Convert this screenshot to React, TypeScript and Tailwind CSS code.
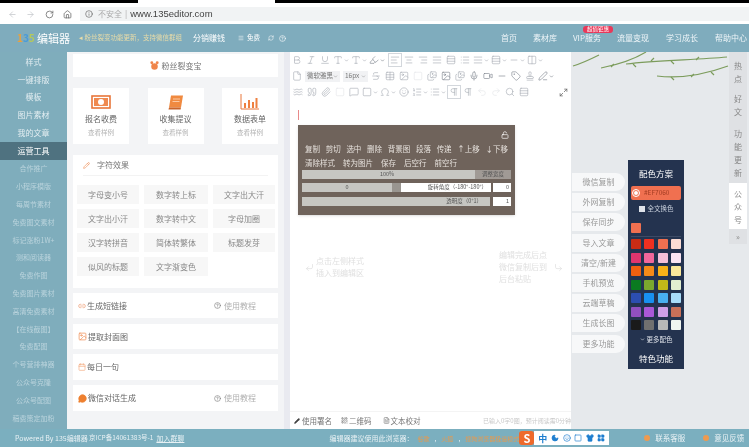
import React from "react";
import {
  ArrowLeft, ArrowRight, RotateCw, Home, Info, Bold, Italic, Underline, Type, Highlighter,
  AlignLeft, AlignCenter, AlignRight, AlignJustify, List, ListOrdered, Rows3, Table, Columns2,
  File, Strikethrough, Image, Images, Mic, Video, Minus, Tag, Stamp, PenLine, Waves, Quote,
  Paperclip, MessageSquare, Square, Omega, Smile, Pilcrow, Undo2, Redo2, Search, Maximize2,
  ChevronDown, LockOpen, CornerDownLeft, CornerDownRight, Pencil, QrCode, FileText, CircleHelp,
  Link2, Calendar, MessageCircle, Globe, RefreshCw, Menu, Moon, Shirt, LayoutGrid,
} from "lucide-react";

const sideTop = ["样式", "一键排版", "模板", "图片素材", "我的文章"];
const sideBottom = ["合作推广", "小程序模版", "每周节素材", "免费图文素材", "标记涨粉1W+", "测和阅读器", "免费作图", "免费图片素材", "高清免费素材", "【在线截图】", "免费配图", "个号营排神器", "公众号克隆", "公众号配图", "稿费策定加粉"];
const navItems = ["首页", "素材库", "VIP服务", "流量变现", "学习成长", "帮助中心"];
const charTools = ["字母变小号", "数字转上标", "文字出大汗", "文字出小汗", "数字转中文", "字母加圈", "汉字转拼音", "简体转繁体", "标题发芽", "似风的标题", "文字渐变色"];
const actions = ["微信复制", "外网复制", "保存同步", "导入文章", "清空/新建", "手机预览", "云端草稿", "生成长图", "更多功能"];
const swatches = [
  "#c82c14", "#f03020", "#f07050", "#fbdcd4",
  "#e0356e", "#f2679b", "#f6c0d8", "#fbe4f2",
  "#f06010", "#f58a18", "#f8b218", "#fbe89a",
  "#0a7a20", "#7aa82e", "#c0b818", "#e2efd0",
  "#2c4eb0", "#1890f0", "#48b0f0", "#a8dcf8",
  "#9050c0", "#a858d8", "#d0a0e8", "#c87058",
  "#1a1a1a", "#707070", "#b8b8b8", "#f0f5f0",
];

interface ToolItem {
  icon: React.ElementType;
  caret?: boolean;
  boxed?: boolean;
  faint?: boolean;
  dark?: boolean;
}

const row1a: ToolItem[] = [
  { icon: Bold }, { icon: Italic }, { icon: Underline },
  { icon: Type, caret: true }, { icon: Type, caret: true }, { icon: Highlighter, caret: true, dark: true },
];
const row1b: ToolItem[] = [
  { icon: AlignLeft, boxed: true }, { icon: AlignCenter }, { icon: AlignRight }, { icon: AlignJustify },
  { icon: Rows3 }, { icon: List }, { icon: AlignJustify, caret: true }, { icon: Rows3, caret: true },
  { icon: Minus, caret: true }, { icon: Columns2, caret: true },
];
const row2: ToolItem[] = [
  { icon: Strikethrough }, { icon: Table }, { icon: Image }, { icon: Square, faint: true },
  { icon: Images }, { icon: Image, dark: true }, { icon: Images }, { icon: Mic, dark: true },
  { icon: Video, dark: true }, { icon: Minus, dark: true }, { icon: Tag, dark: true }, { icon: Stamp }, { icon: PenLine, caret: true, dark: true },
];
const row3: ToolItem[] = [
  { icon: Waves }, { icon: Quote }, { icon: Paperclip }, { icon: Square, faint: true },
  { icon: MessageSquare }, { icon: Square, caret: true }, { icon: Omega, caret: true }, { icon: Smile },
  { icon: ListOrdered, caret: true }, { icon: List, caret: true }, { icon: Pilcrow, boxed: true }, { icon: Pilcrow },
  { icon: Undo2, faint: true }, { icon: Redo2, faint: true }, { icon: Search }, { icon: Rows3 },
];

const Tool = ({ item }: { item: ToolItem }) => {
  const Icon = item.icon;
  const color = item.faint ? "text-[#e4e6e9]" : item.dark ? "text-[#7b828c]" : "text-[#a6acb4]";
  return (
    <div className={`flex h-[14px] items-center justify-center ${item.caret ? "w-[18px]" : "w-[14px]"} ${item.boxed ? "border border-[#d3d7dc]" : ""} ${color}`}>
      <Icon size={10} strokeWidth={1.5} />
      {item.caret && <ChevronDown size={5} strokeWidth={3} className="ml-px" />}
    </div>
  );
};

const HelpLink = () => (
  <div className="flex items-center gap-[3px] text-[8px] text-[#b0b0b0]">
    <CircleHelp size={7} className="text-[#777]" />
    使用教程
  </div>
);

const App = () => {
  return (
    <div className="flex h-[447px] w-[749px] flex-col overflow-hidden bg-white blur-[0.6px] font-['Noto_Sans_CJK_SC','Noto_Sans',sans-serif]">
      {/* browser chrome */}
      <div className="flex h-[3px] shrink-0 bg-black">
        <div className="ml-[138px] w-[137px] bg-white" />
      </div>
      <div className="flex h-[21px] shrink-0 items-start bg-white pt-[4px]">
        <div className="flex h-[14px] w-[80px] items-center text-[#666]">
          <ArrowLeft size={9} className="ml-[8px] text-[#c4c7cb]" />
          <ArrowRight size={9} className="ml-[9px] text-[#c4c7cb]" />
          <RotateCw size={9} className="ml-[10px]" />
          <Home size={9} className="ml-[9px]" />
        </div>
        <div className="flex h-[14px] flex-1 items-center bg-[#f1f3f4] pl-[5px]">
          <Info size={8} className="text-[#666]" />
          <span className="ml-[5px] text-[8px] text-[#aaa]">不安全</span>
          <span className="ml-[3px] text-[8px] text-[#aaa]">|</span>
          <span className="ml-[3px] font-['Liberation_Sans'] text-[9.5px] text-[#444]">www.135editor.com</span>
        </div>
      </div>

      {/* header */}
      <div className="flex h-[28px] shrink-0 items-center bg-[#7facbd] text-white">
        <div className="ml-[17px] flex w-[16px] text-[10px] font-bold leading-none">
          <span className="text-[#e9a13f]">1</span>
          <span className="text-[#4a9bd8]">3</span>
          <span className="text-[#b6c95a]">5</span>
        </div>
        <span className="ml-[4px] text-[11px] leading-none">编辑器</span>
        <span className="ml-[9px] whitespace-nowrap text-[6.5px] text-[#e9dca8]">◂ 粉丝裂变功能更新，支持微信群组</span>
        <span className="ml-[11px] text-[8px]">分销赚钱</span>
        <Menu size={6} className="ml-[13px]" />
        <span className="ml-[3px] text-[6.5px]">免费</span>
        <RefreshCw size={6} className="ml-[8px]" />
        <CircleHelp size={7} className="ml-[5px]" />
        <div className="ml-auto flex items-center pr-[2px] text-[8px] text-[#eef5f8]">
          {navItems.map((item, i) => (
            <div key={item} className={`relative whitespace-nowrap ${i === 0 ? "" : i < 4 ? "ml-[16px]" : "ml-[17px]"}`}>
              {item}
              {i === 2 && (
                <span className="absolute left-[10px] top-[-6px] w-[30px] rounded-[3px] bg-[#e8395a] text-center text-[5.5px] leading-[7px] text-white">
                  超值钜惠
                </span>
              )}
            </div>
          ))}
        </div>
      </div>

      {/* body */}
      <div className="flex min-h-0 flex-1">
        {/* sidebar */}
        <div className="w-[67px] shrink-0 overflow-hidden bg-[#7fadbc] pt-px text-center">
          {sideTop.map((s) => (
            <div key={s} className="flex h-[17.8px] items-center justify-center text-[8px] text-[#e2edf1]">{s}</div>
          ))}
          <div className="flex h-[17.8px] items-center justify-center bg-[#4f7280] text-[8px] text-white">运营工具</div>
          {sideBottom.map((s) => (
            <div key={s} className="flex h-[17.8px] items-center justify-center whitespace-nowrap text-[7px] text-[#b9d3dc]">{s}</div>
          ))}
        </div>

        {/* tools panel */}
        <div className="flex w-[217px] shrink-0 flex-col bg-[#f3f4f6] px-[6px] pt-[2px]">
          <div className="flex h-[23px] shrink-0 items-center justify-center gap-[3px] bg-white text-[8px] text-[#777]">
            <svg width="9" height="9" viewBox="0 0 10 10" fill="#f0854a">
              <circle cx="2" cy="2" r="1.6" /><circle cx="8" cy="2" r="1.6" /><circle cx="5" cy="6" r="3.6" />
            </svg>
            粉丝裂变宝
          </div>
          <div className="mt-[11px] flex h-[56px] shrink-0 justify-between">
            <div className="flex w-[56px] flex-col items-center bg-white pt-[7px]">
              <svg width="20" height="14" viewBox="0 0 20 14">
                <rect x="1" y="1" width="18" height="12" fill="#fff" stroke="#e8763a" strokeWidth="1.6" />
                <rect x="3" y="3" width="14" height="8" fill="#f08a50" />
                <circle cx="10" cy="7" r="3" fill="#fff" />
              </svg>
              <div className="mt-[4px] text-[8px] leading-[12px] text-[#666]">报名收费</div>
              <div className="mt-[2px] text-[6.5px] leading-[10px] text-[#b4b4b4]">查看样例</div>
            </div>
            <div className="flex w-[56px] flex-col items-center bg-white pt-[7px]">
              <svg width="17" height="15" viewBox="0 0 17 15">
                <path d="M4 0.5h12l-2 12H2z" fill="#f08a40" />
                <path d="M2 12.5h12l-0.4 2H1.5z" fill="#c9642a" />
                <path d="M6 4h7M5.500 6.500h7" stroke="#ffd9bd" strokeWidth="0.8" />
              </svg>
              <div className="mt-[3px] text-[8px] leading-[12px] text-[#666]">收集提议</div>
              <div className="mt-[2px] text-[6.5px] leading-[10px] text-[#b4b4b4]">查看样例</div>
            </div>
            <div className="flex w-[56px] flex-col items-center bg-white pt-[6px]">
              <svg width="20" height="16" viewBox="0 0 20 16">
                <path d="M1 0v15h18" fill="none" stroke="#e8763a" strokeWidth="1" />
                <path d="M4 9h2v5H4zM8 6h2v8H8zM12 8h2v6h-2zM15.500 4h2v10h-2z" fill="#ee8040" />
              </svg>
              <div className="mt-[3px] text-[8px] leading-[12px] text-[#666]">数据表单</div>
              <div className="mt-[2px] text-[6.5px] leading-[10px] text-[#b4b4b4]">查看样例</div>
            </div>
          </div>

          <div className="mt-[11px] h-[133px] shrink-0 bg-white px-[4px]">
            <div className="mx-[6px] flex h-[21px] items-center gap-[7px] border-b border-[#f3f3f3] text-[8px] text-[#777]">
              <Pencil size={7} className="text-[#ee8a50]" />
              字符效果
            </div>
            <div className="mt-[9px] grid grid-cols-[62px_64px_62px] gap-x-[5px] gap-y-[5px]">
              {charTools.map((t) => (
                <div key={t} className="flex h-[19px] items-center justify-center bg-[#f7f7f7] text-[8px] text-[#888]">{t}</div>
              ))}
            </div>
          </div>

          <div className="mt-[5px] flex h-[25px] shrink-0 items-center bg-white pl-[5px] pr-[22px] text-[8px] text-[#666]">
            <Link2 size={8} className="mr-[1px] text-[#ee9a70]" />
            生成短链接
            <div className="ml-auto"><HelpLink /></div>
          </div>
          <div className="mt-[6px] flex h-[25px] shrink-0 items-center bg-white pl-[5px] text-[8px] text-[#666]">
            <Image size={9} className="mr-[1px] text-[#f0935c]" />
            提取封面图
          </div>
          <div className="mt-[5px] flex h-[26px] shrink-0 items-center bg-white pl-[5px] text-[8px] text-[#666]">
            <Calendar size={8} className="mr-[1px] text-[#f5ab80]" />
            每日一句
          </div>
          <div className="mt-[5px] flex h-[26px] shrink-0 items-center bg-white pl-[5px] pr-[22px] text-[8px] text-[#666]">
            <MessageCircle size={9} fill="#ee8030" className="mr-[1px] text-[#ee8030]" />
            微信对话生成
            <div className="ml-auto"><HelpLink /></div>
          </div>
        </div>
        <div className="w-[6px] shrink-0 bg-[#e9eaf0]" />

        {/* editor */}
        <div className="flex w-[281px] shrink-0 flex-col bg-white">
          <div className="flex h-[48px] shrink-0 flex-col justify-center gap-[2px]">
            <div className="flex items-center">
              {row1a.map((t, i) => <Tool key={i} item={t} />)}
              <div className="w-[2px]" />
              {row1b.map((t, i) => <Tool key={i} item={t} />)}
            </div>
            <div className="flex items-center">
              <Tool item={{ icon: File }} />
              <div className="ml-px flex h-[11px] w-[35px] items-center justify-between whitespace-nowrap bg-[#f1f2f4] px-[2px] text-[6.5px] text-[#777]">
                微软雅黑 <ChevronDown size={5} />
              </div>
              <div className="ml-[3px] flex h-[11px] w-[25px] items-center justify-between whitespace-nowrap bg-[#f1f2f4] px-[2px] text-[6.5px] text-[#777]">
                16px <ChevronDown size={5} />
              </div>
              <div className="w-px" />
              {row2.map((t, i) => <Tool key={i} item={t} />)}
            </div>
            <div className="flex items-center pl-px">
              {row3.map((t, i) => <Tool key={i} item={t} />)}
              <Maximize2 size={9} className="ml-auto mr-[3px] text-[#666]" />
            </div>
          </div>

          <div className="ml-[8px] mt-[10px] h-[10px] w-px bg-[#e88a8a]" />

          <div className="ml-[8px] mt-[5px] w-[217px] bg-[#6f635b] px-[4px] pb-[9px] pt-[6px] text-[#e6e1dc] shadow-sm">
            <div className="flex h-[11px] justify-end pr-[2px]">
              <LockOpen size={8} className="text-white" />
            </div>
            <div className="flex h-[14px] items-center justify-between px-[3px] text-[7.5px]">
              {["复制", "剪切", "选中", "删除", "背景图", "段落", "传递", "↑上移", "↓下移"].map((t) => <span key={t} className="whitespace-nowrap">{t}</span>)}
            </div>
            <div className="flex h-[14px] items-center gap-[8px] pl-[3px] text-[7.5px]">
              {["清除样式", "转为图片", "保存", "后空行", "前空行"].map((t) => <span key={t} className="whitespace-nowrap">{t}</span>)}
            </div>
            <div className="flex h-[9px] items-center bg-[#c6c6c2] text-[5.5px] text-[#555]">
              <span className="w-[170px] text-center">100%</span>
              <span className="ml-auto h-full w-[36px] whitespace-nowrap bg-[#a09a95] text-center leading-[9px]">调整宽度</span>
            </div>
            <div className="mt-[4px] flex h-[9px] items-center text-[5.5px] text-[#555]">
              <div className="h-full w-[90px] bg-[#c6c6c2] text-center leading-[9px]">0</div>
              <div className="h-full w-[9px] bg-[#999590]" />
              <div className="h-full w-[90px] whitespace-nowrap bg-white pr-[4px] text-right leading-[9px]">旋转角度（-180°-180°）</div>
              <div className="ml-[2px] h-full flex-1 bg-white pr-[2px] text-right leading-[9px]">0</div>
            </div>
            <div className="mt-[5px] flex h-[9px] items-center text-[5.5px] text-[#555]">
              <div className="h-full w-[188px] whitespace-nowrap bg-[#c6c6c2] pr-[8px] text-right leading-[9px]">透明度（0°1）</div>
              <div className="ml-[3px] h-full flex-1 bg-white pr-[2px] text-right leading-[9px]">1</div>
            </div>
          </div>

          <div className="mt-[34px] flex items-center whitespace-nowrap text-[8px] leading-[12px] text-[#e0e0e0]">
            <CornerDownLeft size={9} className="ml-[15px]" />
            <div className="ml-[2px] w-[48px]">
              <div>点击左侧样式</div>
              <div>插入到编辑区</div>
            </div>
            <div className="ml-[135px] w-[48px]">
              <div>编辑完成后点</div>
              <div>微信复制后到</div>
              <div>后台粘贴</div>
            </div>
            <CornerDownRight size={9} className="ml-[7px]" />
          </div>

          <div className="mt-auto flex h-[18px] shrink-0 items-center border-t border-[#f4f4f4] pl-[4px] text-[7.5px] text-[#777]">
            <Pencil size={6} fill="#444" className="text-[#444]" />
            <span className="ml-[2px]">使用署名</span>
            <QrCode size={7} className="ml-[9px]" />
            <span className="ml-[1px]">二维码</span>
            <FileText size={7} className="ml-[11px]" />
            <span className="ml-[1px]">文本校对</span>
            <span className="ml-auto whitespace-nowrap text-[6px] text-[#c8c8c8]">已输入0字0图，预计阅读需0分钟</span>
          </div>
        </div>

        {/* right area */}
        <div className="relative flex flex-1 bg-[#e6e9ec]">
          <svg className="absolute left-0 top-0" width="160" height="36" viewBox="0 0 160 36" fill="none" stroke="#7c9c5c" strokeWidth="1.2">
            <path d="M2 14C12 11 20 7 28 3" />
            <path d="M30 16C50 12 62 8 75 0" />
            <path d="M55 12C85 8 125 8 156 5" />
            <path d="M86 24C110 27 135 22 157 14" />
            <path d="M40 15l3-3M62 12l3 3M80 9l3-3M100 9l3 3M125 8l3-3M100 25l3 3M120 25l3-3M140 20l3 3" />
          </svg>
          <div className="flex w-[57px] shrink-0 flex-col gap-[2.2px] pl-px pt-[121px]">
            {actions.map((a) => (
              <div key={a} className="flex h-[18px] w-[53px] items-center justify-center rounded-r-[9px] bg-[#f7f8f9] text-[8px] text-[#999]">{a}</div>
            ))}
          </div>
          <div className="mt-[108px] flex h-[209px] w-[56px] shrink-0 flex-col items-center bg-[#24334f] text-white">
            <div className="flex h-[26px] shrink-0 items-center text-[8.5px]">配色方案</div>
            <div className="flex h-[14px] w-[50px] shrink-0 items-center rounded-[2px] bg-[#f07050] pl-[2px] text-[6.5px] text-[#a33c22]">
              <span className="h-[6px] w-[6px] rounded-full border-[1.5px] border-[#f07050] bg-white outline outline-1 outline-white" />
              <span className="ml-[5px]">#EF7060</span>
            </div>
            <div className="mt-[2px] flex h-[14px] shrink-0 items-center text-[6.5px] text-[#c8d0dc]">
              <span className="mr-[3px] h-[6px] w-[6px] bg-[#dfe3ea]" />
              全文换色
            </div>
            <div className="mt-[7px] flex w-[50px] shrink-0 border-b border-[#3d4b66] pb-[3px]">
              <div className="h-[10px] w-[10px] rounded-[1px] bg-[#f07050]" />
            </div>
            <div className="mt-[2px] grid w-[50px] shrink-0 grid-cols-[10px_10px_10px_10px] justify-between gap-y-[3.5px]">
              {swatches.map((c, i) => (
                <div key={i} className="h-[10px] w-[10px] rounded-[1px]" style={{ backgroundColor: c }} />
              ))}
            </div>
            <div className="mt-[3px] flex h-[13px] shrink-0 items-center text-[6.5px] text-[#dfe3ea]">
              <ChevronDown size={5} strokeWidth={3} className="mr-[2px]" />
              更多配色
            </div>
            <div className="mt-[4px] text-[8.5px] leading-[16px]">特色功能</div>
          </div>
          <div className="ml-auto mr-[2px] flex h-[192px] w-[18px] shrink-0 flex-col items-center bg-[#dfe1e4] text-[8px] leading-[13px] text-[#888]">
            <div className="mt-[7px] flex flex-col items-center">
              <span>热</span><span>点</span>
            </div>
            <div className="mt-[7px] flex flex-col items-center">
              <span>好</span><span>文</span>
            </div>
            <div className="mt-[9px] flex flex-col items-center">
              <span>功</span><span>能</span><span>更</span><span>新</span>
            </div>
            <div className="mt-[4px] flex h-[46px] w-full flex-col items-center justify-center bg-white">
              <span>公</span><span>众</span><span>号</span>
            </div>
            <div className="mt-[1px] text-[8px] leading-[14px]">»</div>
          </div>
        </div>
      </div>

      {/* footer */}
      <div className="flex h-[18px] shrink-0 items-center whitespace-nowrap bg-[#7bafbf] text-[7px] text-[#e8f1f4]">
        <Globe size={7} className="ml-[9px] text-white" />
        <span className="ml-[6px] w-[70px]">Powered By 135编辑器</span>
        <span className="ml-[4px] w-[68px] text-[6.5px]">京ICP备14061383号-1</span>
        <span className="ml-[3px] w-[28px] underline">加入群聊</span>
        <span className="ml-[145px] w-[84px]">编辑器建议使用此浏览器：</span>
        <span className="ml-[4px] text-[6px] text-[#e59a50]">谷歌</span>
        <span className="mx-[5px]">,</span>
        <span className="text-[6px] text-[#e59a50]">火狐</span>
        <span className="mx-[5px]">,</span>
        <span className="text-[6px] text-[#e59a50]">搜狗浏览器极速模式</span>
        <div className="ml-auto mr-[1px] flex items-center">
          <span className="flex h-[14px] w-[15px] items-center justify-center rounded-[3px] bg-[#ee6a2c] text-[11px] font-bold text-white">S</span>
          <div className="flex h-[14px] w-[75px] items-center justify-around bg-white px-[2px] text-[#1f7fd0]">
            <span className="text-[9px] font-bold leading-none">中</span>
            <Moon size={8} fill="currentColor" />
            <Smile size={8} />
            <Square size={8} />
            <Shirt size={8} fill="currentColor" />
            <LayoutGrid size={8} fill="currentColor" />
          </div>
        </div>
        <div className="mr-[6px] flex w-[134px] items-center text-[7.5px]">
          <span className="ml-[34px] h-[6px] w-[6px] rounded-full bg-[#ee9a50]" />
          <span className="ml-[5px]">联系客服</span>
          <span className="ml-[18px] h-[6px] w-[6px] rounded-full bg-[#ee9a50]" />
          <span className="ml-[5px]">意见反馈</span>
        </div>
      </div>
    </div>
  );
};

export default App;
